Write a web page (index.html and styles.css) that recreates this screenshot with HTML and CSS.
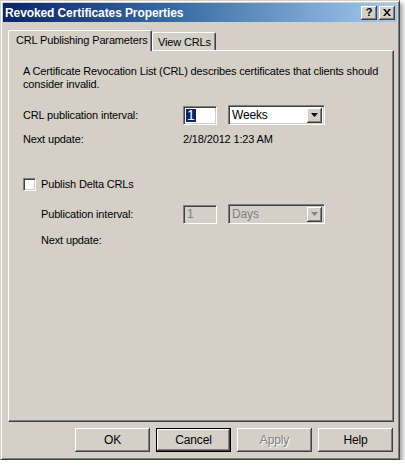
FILE: index.html
```html
<!DOCTYPE html>
<html>
<head>
<meta charset="utf-8">
<link rel="stylesheet" href="styles.css">
</head>
<body>
<div class="window">
  <div class="titlebar">
    <span class="title">Revoked Certificates Properties</span>
    <div class="caption-btns">
      <span class="cbtn help-q">?</span>
      <span class="cbtn close-x"><svg width="8" height="7" viewBox="0 0 8 7"><path d="M0 0h2l2 2.5L6 0h2L5 3.5 8 7H6L4 4.5 2 7H0l3-3.5z" fill="#000"/></svg></span>
    </div>
  </div>
  <div class="client">
    <div class="tabs">
      <div class="tab active">CRL Publishing Parameters</div>
      <div class="tab">View CRLs</div>
    </div>
    <div class="panel">
      <p class="desc">A Certificate Revocation List (CRL) describes certificates that clients should consider invalid.</p>
      <div class="row row-first">
        <span class="label">CRL publication interval:</span>
        <span class="textbox"><span class="sel">1</span></span>
        <span class="combo"><span class="combo-text">Weeks</span><span class="arrow"><svg width="7" height="4" viewBox="0 0 7 4"><path d="M0 0h7L3.5 4z" fill="#000"/></svg></span></span>
      </div>
      <div class="row row-second">
        <span class="label">Next update:</span>
        <span class="value">2/18/2012 1:23 AM</span>
      </div>
      <div class="check-row">
        <span class="checkbox"></span>
        <span>Publish Delta CRLs</span>
      </div>
      <div class="row indent">
        <span class="label">Publication interval:</span>
        <span class="textbox disabled">1</span>
        <span class="combo disabled"><span class="combo-text">Days</span><span class="arrow"><svg width="7" height="4" viewBox="0 0 7 4"><path d="M0 0h7L3.5 4z" fill="#808080"/></svg></span></span>
      </div>
      <div class="row indent indent-2">
        <span class="label">Next update:</span>
      </div>
    </div>
    <div class="buttons">
      <span class="btn">OK</span>
      <span class="btn default">Cancel</span>
      <span class="btn disabled">Apply</span>
      <span class="btn">Help</span>
    </div>
  </div>
</div>
</body>
</html>
```
FILE: styles.css
```css
html, body {
  margin: 0;
  padding: 0;
  background: #ffffff;
}
body {
  font-family: "Liberation Sans", Arial, sans-serif;
  font-size: 11px;
  letter-spacing: -0.15px;
  color: #000;
}
.window {
  box-sizing: border-box;
  width: 400px;
  height: 460px;
  background: #d4d0c8;
  border-top: 1px solid #d4d0c8;
  border-left: 1px solid #d4d0c8;
  border-right: 1px solid #404040;
  border-bottom: 1px solid #404040;
  box-shadow: inset 1px 1px 0 #ffffff, inset -1px -1px 0 #808080, 3px 3px 4px rgba(0,0,0,0.35);
  padding: 2px;
  display: flex;
  flex-direction: column;
}
.titlebar {
  height: 19px;
  background: linear-gradient(to right, #0a246a 0%, #3a6ea5 45%, #a6caf0 100%);
  display: flex;
  align-items: center;
  justify-content: space-between;
  padding: 0 2px 0 2px;
}
.title {
  color: #fff;
  font-weight: bold;
  font-size: 12px;
  letter-spacing: -0.1px;
}
.caption-btns {
  display: flex;
  gap: 2px;
}
.cbtn {
  box-sizing: border-box;
  width: 16px;
  height: 14px;
  background: #d4d0c8;
  box-shadow: inset -1px -1px 0 #404040, inset 1px 1px 0 #ffffff, inset -2px -2px 0 #808080;
  display: flex;
  align-items: center;
  justify-content: center;
  font-weight: bold;
  font-size: 11px;
  line-height: 1;
}
.client {
  flex: 1;
  display: flex;
  flex-direction: column;
  padding: 8px 3px 0 5px;
}
.tabs {
  display: flex;
  align-items: flex-end;
  height: 20px;
  position: relative;
  z-index: 1;
}
.tab {
  box-sizing: border-box;
  height: 18px;
  padding: 0 4px 0 5px;
  border-top: 1px solid #fff;
  border-left: 1px solid #fff;
  border-right: 1px solid #404040;
  box-shadow: inset -1px 0 0 #808080;
  border-radius: 2px 2px 0 0;
  display: flex;
  align-items: center;
  background: #d4d0c8;
  white-space: nowrap;
}
.tab.active {
  height: 21px;
  margin-bottom: -1px;
  padding: 0 7px 2px 7px;
  width: 144px;
}
.panel {
  box-sizing: border-box;
  height: 372px;
  width: 386px;
  border-top: 1px solid #fff;
  border-left: 1px solid #fff;
  border-right: 1px solid #404040;
  border-bottom: 1px solid #404040;
  box-shadow: inset -1px -1px 0 #808080;
  padding: 14px 14px 0 14px;
}
.desc {
  margin: 0;
  line-height: 13px;
  width: 362px;
}
.row {
  display: grid;
  grid-template-columns: 160px 45px 97px;
  align-items: center;
  height: 18px;
  white-space: nowrap;
}
.row-first {
  margin-top: 14px;
}
.row-second {
  margin-top: 7px;
}
.row.indent {
  grid-template-columns: 142px 45px 97px;
  padding-left: 18px;
  margin-top: 13px;
}
.row.indent-2 {
  margin-top: 9px;
}
.label, .value {
  line-height: 14px;
}
.textbox {
  box-sizing: border-box;
  width: 34px;
  height: 19px;
  background: #fff;
  border-top: 1px solid #808080;
  border-left: 1px solid #808080;
  border-right: 1px solid #fff;
  border-bottom: 1px solid #fff;
  box-shadow: inset 1px 1px 0 #404040, inset -1px -1px 0 #d4d0c8;
  padding: 2px 2px;
  line-height: 13px;
  font-size: 14px;
  display: flex;
  align-items: center;
}
.sel {
  background: #0a246a;
  color: #fff;
  padding: 0 1px;
}
.textbox.disabled {
  background: #d4d0c8;
  color: #808080;
  font-size: 12px;
  padding-left: 3px;
}
.combo {
  box-sizing: border-box;
  width: 97px;
  height: 20px;
  background: #fff;
  border-top: 1px solid #808080;
  border-left: 1px solid #808080;
  border-right: 1px solid #fff;
  border-bottom: 1px solid #fff;
  box-shadow: inset 1px 1px 0 #404040, inset -1px -1px 0 #d4d0c8;
  display: flex;
  align-items: center;
  justify-content: space-between;
  padding: 1px 2px 1px 3px;
  font-size: 12px;
}
.combo.disabled {
  background: #d4d0c8;
  color: #808080;
}
.arrow {
  box-sizing: border-box;
  width: 15px;
  height: 15px;
  background: #d4d0c8;
  box-shadow: inset -1px -1px 0 #404040, inset 1px 1px 0 #ffffff, inset -2px -2px 0 #808080;
  display: flex;
  align-items: center;
  justify-content: center;
}
.check-row {
  display: flex;
  align-items: center;
  gap: 5px;
  margin-top: 29px;
  height: 14px;
}
.checkbox {
  box-sizing: border-box;
  width: 13px;
  height: 13px;
  background: #fff;
  border-top: 1px solid #808080;
  border-left: 1px solid #808080;
  border-right: 1px solid #fff;
  border-bottom: 1px solid #fff;
  box-shadow: inset 1px 1px 0 #404040, inset -1px -1px 0 #d4d0c8;
}
.buttons {
  display: flex;
  justify-content: flex-end;
  gap: 6px;
  padding: 6px 1px 0 0;
}
.btn {
  box-sizing: border-box;
  width: 75px;
  height: 24px;
  background: #d4d0c8;
  box-shadow: inset -1px -1px 0 #404040, inset 1px 1px 0 #ffffff, inset -2px -2px 0 #808080;
  display: flex;
  align-items: center;
  justify-content: center;
  font-size: 12px;
}
.btn.default {
  border: 1px solid #000;
}
.btn.disabled {
  color: #808080;
  text-shadow: 1px 1px 0 #fff;
}
```
